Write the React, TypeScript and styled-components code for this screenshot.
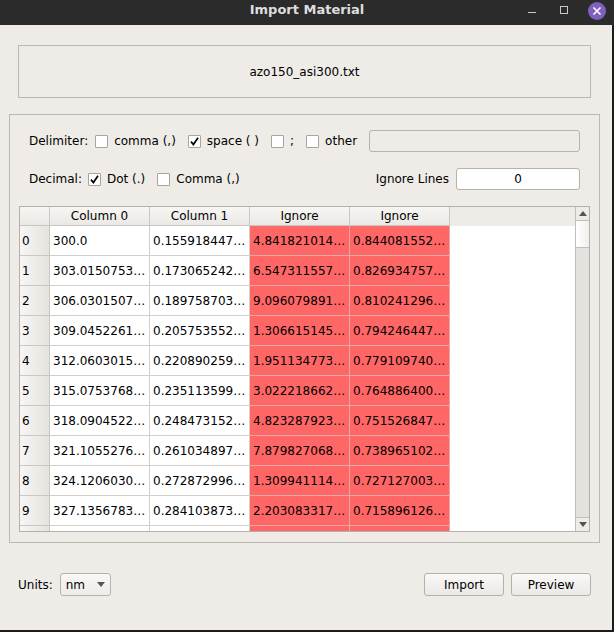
import React from 'react';
import styled, { createGlobalStyle } from 'styled-components';

const Global = createGlobalStyle`
  html, body { margin: 0; padding: 0; background: #1c1c1c; }
  body { font-family: "DejaVu Sans", "Liberation Sans", sans-serif; font-size: 12px; color: #000; }
  * { box-sizing: border-box; }
`;

const Frame = styled.div`
  width: 614px;
  height: 632px;
  display: flex;
  flex-direction: column;
  background: #1c1c1c;
  overflow: hidden;
`;

const TitleBar = styled.div`
  flex: none;
  height: 25px;
  background: #2b2b2b;
  display: grid;
  grid-template-columns: 1fr auto 1fr;
  align-items: start;
`;

const Title = styled.div`
  grid-column: 2;
  font-weight: bold;
  font-size: 13px;
  color: #dedede;
  line-height: 20px;
`;

const Controls = styled.div`
  grid-column: 3;
  justify-self: end;
  display: flex;
  align-items: center;
  height: 20px;
  padding-right: 8px;
`;

const MinBtn = styled.div`
  width: 8px;
  height: 1px;
  background: #c8c8c8;
  margin-top: 5px;
`;

const MaxBtn = styled.div`
  width: 8px;
  height: 8px;
  border: 1px solid #c8c8c8;
  margin-left: 24px;
  margin-top: -1px;
`;

const CloseBtn = styled.div`
  width: 18px;
  height: 18px;
  border-radius: 50%;
  background: #7f5fbf;
  margin-left: 20px;
  margin-top: 1px;
  display: flex;
  align-items: center;
  justify-content: center;
`;

const Window = styled.div`
  flex: 1;
  display: flex;
  width: 614px;
`;

const Body = styled.div`
  width: 612px;
  height: 605px;
  background: #efece8;
  display: flex;
  flex-direction: column;
  padding: 20px 12px 0 9px;
`;

const FileBox = styled.div`
  margin: 0 9px;
  height: 53px;
  border: 1px solid #bcb8b3;
  display: flex;
  align-items: center;
  justify-content: center;
  font-size: 12px;
`;

const Group = styled.div`
  margin-top: 16px;
  height: 429px;
  border: 1px solid #bcb8b3;
  padding: 15px 9px 0 9px;
  display: flex;
  flex-direction: column;
`;

const OptionRow = styled.div`
  height: 22px;
  margin: 0 10px 16px 10px;
  display: flex;
  align-items: center;
`;

const Label = styled.span<{ $gap?: number }>`
  white-space: nowrap;
  margin-right: ${(p) => p.$gap ?? 6}px;
`;

const CheckItem = styled.label`
  display: flex;
  align-items: center;
  margin-right: 12px;
  white-space: nowrap;
`;

const Box = styled.span`
  width: 13px;
  height: 13px;
  border: 1px solid #a8a4a0;
  border-radius: 1px;
  background: #fff;
  margin-right: 6px;
  display: flex;
  align-items: center;
  justify-content: center;
`;

const Spacer = styled.div`
  flex: 1;
`;

const TextField = styled.div<{ $white?: boolean; $w?: number }>`
  height: 22px;
  width: ${(p) => (p.$w ? `${p.$w}px` : 'auto')};
  flex: ${(p) => (p.$w ? 'none' : '1')};
  border: 1px solid #b6b2ad;
  border-radius: 3px;
  background: ${(p) => (p.$white ? '#fff' : '#efece8')};
  display: flex;
  align-items: center;
  justify-content: center;
`;

const Table = styled.div`
  height: 326px;
  border: 1px solid #b4b0ab;
  display: flex;
  background: #fff;
`;

const Viewport = styled.div`
  flex: 1;
  overflow: hidden;
  display: flex;
  flex-direction: column;
`;

const HeaderRow = styled.div`
  display: flex;
  height: 19px;
  flex: none;
  background: #efece8;
`;

const HeadCell = styled.div<{ $w: number }>`
  width: ${(p) => p.$w}px;
  flex: none;
  height: 19px;
  border-right: 1px solid #cac6c1;
  border-bottom: 1px solid #cac6c1;
  background: linear-gradient(#f7f6f4, #ebe8e4);
  display: flex;
  align-items: center;
  justify-content: center;
  white-space: nowrap;
`;

const HeadFill = styled.div`
  flex: 1;
  height: 18px;
  background: #efece8;
`;

const DataRow = styled.div`
  display: flex;
  height: 30px;
  flex: none;
`;

const RowHead = styled.div`
  width: 30px;
  flex: none;
  border-right: 1px solid #cac6c1;
  border-bottom: 1px solid #cac6c1;
  background: linear-gradient(to right, #f7f6f4, #e6e3df);
  display: flex;
  align-items: center;
  padding-left: 2px;
`;

const Cell = styled.div<{ $red?: boolean }>`
  width: 100px;
  flex: none;
  border-right: 1px solid ${(p) => (p.$red ? '#e7a9a7' : '#d2cfcb')};
  border-bottom: 1px solid ${(p) => (p.$red ? '#e7a9a7' : '#d2cfcb')};
  background: ${(p) => (p.$red ? '#ff6666' : '#fff')};
  display: flex;
  align-items: center;
  padding-left: 3px;
  white-space: nowrap;
  overflow: hidden;
`;

const ScrollBar = styled.div`
  width: 14px;
  flex: none;
  border-left: 1px solid #c2beb9;
  background: #e4e2de;
  display: flex;
  flex-direction: column;
`;

const ArrowBtn = styled.div<{ $bottom?: boolean }>`
  height: 14px;
  flex: none;
  background: #efece8;
  border-bottom: ${(p) => (p.$bottom ? 'none' : '1px solid #c2beb9')};
  border-top: ${(p) => (p.$bottom ? '1px solid #c2beb9' : 'none')};
  display: flex;
  align-items: center;
  justify-content: center;
`;

const Handle = styled.div`
  height: 27px;
  flex: none;
  background: linear-gradient(to right, #ffffff, #f1efed);
  border-bottom: 1px solid #c2beb9;
`;

const Trough = styled.div`
  flex: 1;
`;

const BottomRow = styled.div`
  margin: 30px 9px 0 9px;
  height: 23px;
  display: flex;
  align-items: center;
`;

const Combo = styled.div`
  width: 51px;
  height: 23px;
  border: 1px solid #b6b2ad;
  border-radius: 3px;
  background: linear-gradient(#f9f8f7, #eeebe8);
  display: flex;
  align-items: center;
  padding: 0 5px 0 5px;
  justify-content: space-between;
`;

const Button = styled.div`
  width: 80px;
  height: 23px;
  border: 1px solid #b4b0ab;
  border-radius: 3px;
  background: linear-gradient(#faf9f8, #ebe8e5);
  display: flex;
  align-items: center;
  justify-content: center;
  margin-left: 7px;
`;

const RightEdge = styled.div`
  width: 2px;
  background: #1c1c1c;
`;

const Check = () => (
  <svg width="11" height="11" viewBox="0 0 11 11">
    <path d="M2 5.6 L4.4 8.6 L9 1.8" fill="none" stroke="#000" strokeWidth="1.7" />
  </svg>
);

const CheckBox = ({ checked, label }: { checked?: boolean; label: string }) => (
  <CheckItem>
    <Box>{checked ? <Check /> : null}</Box>
    {label}
  </CheckItem>
);

const Tri = ({ down }: { down?: boolean }) => (
  <svg width="8" height="5" viewBox="0 0 8 5">
    <path d={down ? 'M0 0 L8 0 L4 5 Z' : 'M0 5 L8 5 L4 0 Z'} fill="#555" />
  </svg>
);

const rows: string[][] = [
  ['300.0', '0.155918447…', '4.841821014…', '0.844081552…'],
  ['303.0150753…', '0.173065242…', '6.547311557…', '0.826934757…'],
  ['306.0301507…', '0.189758703…', '9.096079891…', '0.810241296…'],
  ['309.0452261…', '0.205753552…', '1.306615145…', '0.794246447…'],
  ['312.0603015…', '0.220890259…', '1.951134773…', '0.779109740…'],
  ['315.0753768…', '0.235113599…', '3.022218662…', '0.764886400…'],
  ['318.0904522…', '0.248473152…', '4.823287923…', '0.751526847…'],
  ['321.1055276…', '0.261034897…', '7.879827068…', '0.738965102…'],
  ['324.1206030…', '0.272872996…', '1.309941114…', '0.727127003…'],
  ['327.1356783…', '0.284103873…', '2.203083317…', '0.715896126…'],
  ['', '', '', ''],
];

const headers = ['Column 0', 'Column 1', 'Ignore', 'Ignore'];

export default function App() {
  return (
    <Frame>
      <Global />
      <TitleBar>
        <Title>Import Material</Title>
        <Controls>
          <MinBtn />
          <MaxBtn />
          <CloseBtn>
            <svg width="10" height="10" viewBox="0 0 10 10">
              <path d="M1.5 1.5 L8.5 8.5 M8.5 1.5 L1.5 8.5" stroke="#fff" strokeWidth="1.6" />
            </svg>
          </CloseBtn>
        </Controls>
      </TitleBar>
      <Window>
        <Body>
          <FileBox>azo150_asi300.txt</FileBox>
          <Group>
            <OptionRow>
              <Label $gap={7}>Delimiter:</Label>
              <CheckBox label="comma (,)" />
              <CheckBox checked label="space ( )" />
              <CheckBox label=";" />
              <CheckBox label="other" />
              <TextField />
            </OptionRow>
            <OptionRow>
              <Label $gap={6}>Decimal:</Label>
              <CheckBox checked label="Dot (.)" />
              <CheckBox label="Comma (,)" />
              <Spacer />
              <Label $gap={7}>Ignore Lines</Label>
              <TextField $white $w={124}>0</TextField>
            </OptionRow>
            <Table>
              <Viewport>
                <HeaderRow>
                  <HeadCell $w={30} />
                  {headers.map((h, i) => (
                    <HeadCell key={i} $w={100}>{h}</HeadCell>
                  ))}
                  <HeadFill />
                </HeaderRow>
                {rows.map((r, i) => (
                  <DataRow key={i}>
                    <RowHead>{i < 10 ? i : ''}</RowHead>
                    {r.map((v, j) => (
                      <Cell key={j} $red={j >= 2}>{v}</Cell>
                    ))}
                  </DataRow>
                ))}
              </Viewport>
              <ScrollBar>
                <ArrowBtn><Tri /></ArrowBtn>
                <Handle />
                <Trough />
                <ArrowBtn $bottom><Tri down /></ArrowBtn>
              </ScrollBar>
            </Table>
          </Group>
          <BottomRow>
            <Label $gap={7}>Units:</Label>
            <Combo>
              <span>nm</span>
              <Tri down />
            </Combo>
            <Spacer />
            <Button style={{ marginLeft: 0 }}>Import</Button>
            <Button>Preview</Button>
          </BottomRow>
        </Body>
        <RightEdge />
      </Window>
    </Frame>
  );
}
